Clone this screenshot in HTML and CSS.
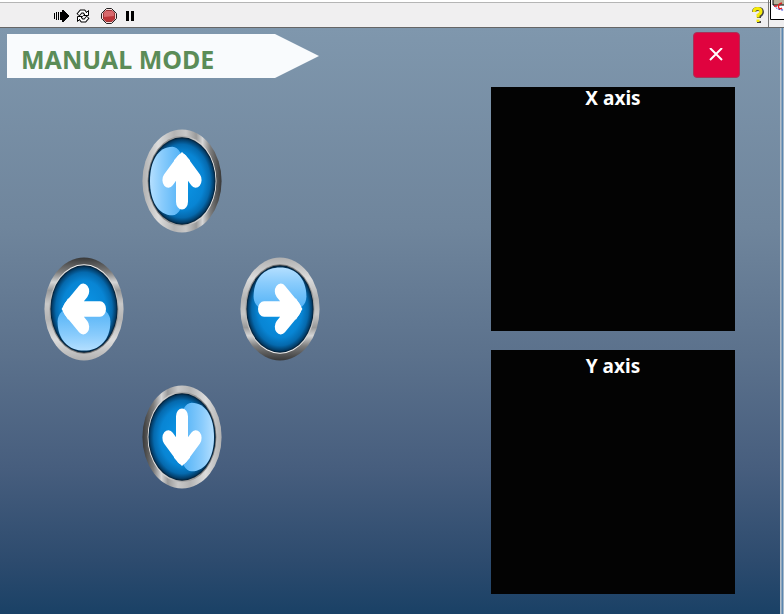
FILE: index.html
```html
<!DOCTYPE html>
<html lang="en">
<head>
<meta charset="utf-8">
<title>Manual mode</title>
<link rel="stylesheet" href="styles.css">
</head>
<body>
<svg class="defs" aria-hidden="true">
  <defs>
    <linearGradient id="rim" x1="0" y1="0" x2="0" y2="1">
      <stop offset="0" stop-color="#b0b0b0"/>
      <stop offset=".2" stop-color="#dcdcdc"/>
      <stop offset=".4" stop-color="#b4b4b4"/>
      <stop offset=".55" stop-color="#c8c8c8"/>
      <stop offset=".68" stop-color="#9a9a9a"/>
      <stop offset=".76" stop-color="#d6d6d6"/>
      <stop offset=".86" stop-color="#7c7c7c"/>
      <stop offset="1" stop-color="#383838"/>
    </linearGradient>
    <linearGradient id="lip" x1="0" y1="0" x2="0" y2="1">
      <stop offset="0" stop-color="#777"/>
      <stop offset=".5" stop-color="#aaa"/>
      <stop offset="1" stop-color="#f4f4f4"/>
    </linearGradient>
    <radialGradient id="glass" cx=".5" cy=".5" r=".5">
      <stop offset="0" stop-color="#0b97e8"/>
      <stop offset=".65" stop-color="#0885d4"/>
      <stop offset=".84" stop-color="#0569ad"/>
      <stop offset=".95" stop-color="#033c67"/>
      <stop offset="1" stop-color="#02192c"/>
    </radialGradient>
    <linearGradient id="gloss" x1="0" y1="0" x2="0" y2="1">
      <stop offset="0" stop-color="#b4dfff"/>
      <stop offset=".35" stop-color="#8accfc"/>
      <stop offset="1" stop-color="#4db0f6"/>
    </linearGradient>
    <symbol id="orb" viewBox="0 0 100 100" preserveAspectRatio="none">
      <ellipse cx="50" cy="50" rx="49.500" ry="49.500" fill="url(#rim)"/>
      <ellipse cx="50" cy="50" rx="43.500" ry="43" fill="url(#lip)"/>
      <ellipse cx="50" cy="50" rx="42" ry="42" fill="url(#glass)"/>
      <path d="M17 38C17 20 31 10 50 10S83 20 83 38C83 46 75 51 64 52H36C25 51 17 46 17 38Z" fill="url(#gloss)"/>
      <path d="M30 50H67M51 33L69 50L51 67" fill="none" stroke="#fff" stroke-width="15" stroke-linecap="round" stroke-linejoin="round"/>
      <path d="M51 44V56L70 60L78 50L70 40Z" fill="#fff"/>
    </symbol>
  </defs>
</svg>

<header class="toolbar">
  <div class="tools">
    <button class="tool" aria-label="Run">
      <svg width="16" height="16" viewBox="0 0 16 16" shape-rendering="crispEdges"><path d="M1 5h1v6H1zM3 4h1v8H3zM5 4h1v8H5zM7 4h2V2h2v1h1v1h1v1h1v1h1v1h1v2h-1v1h-1v1h-1v1h-1v1h-1v1H9v-2H7z"/></svg>
    </button>
    <button class="tool" aria-label="Run continuously">
      <svg width="16" height="16" viewBox="0 0 16 16"><g fill="none" stroke="#000" stroke-width="4"><path d="M3 7L6 3.500H9L11 6"/><path d="M13 9L10 12.500H7L5 10"/></g><g fill="#fff" stroke="#000"><path d="M8.500 7.500H13.500V2.500Z"/><path d="M7.500 8.500H2.500V13.500Z"/></g><g fill="none" stroke="#fff" stroke-width="2"><path d="M3.500 6.500L6 3.500H9L11 6"/><path d="M12.500 9.500L10 12.500H7L5 10"/></g></svg>
    </button>
    <button class="tool" aria-label="Abort">
      <svg width="16" height="16" viewBox="0 0 16 16"><path d="M5.500 .5h5l5 5v5l-5 5h-5l-5-5v-5z" fill="#f6dede" stroke="#222"/><path d="M5 2.500h6L13.500 5v6L11 13.500H5L2.500 11V5z" fill="#bd3438" stroke="#9c3537"/><path d="M5 3h6l2 2v3L3 9V5z" fill="#d8686c"/></svg>
    </button>
    <button class="tool" aria-label="Pause">
      <svg width="16" height="16" viewBox="0 0 16 16" shape-rendering="crispEdges"><path d="M1 3h3v10H1zM6 3h3v10H6z"/></svg>
    </button>
  </div>
  <button class="tool help" aria-label="Help">
    <svg width="16" height="18" viewBox="0 0 16 18"><path d="M4 6Q4 3 8 3T12 6Q12 8 9 10V12M9 15V17" fill="none" stroke="#444" stroke-width="4"/><path d="M4 6Q4 2.500 7.500 2.500T11 5.500Q11 7.500 8 9V11.500M8 13.500V16" fill="none" stroke="#f5ea08" stroke-width="3"/></svg>
  </button>
  <div class="badge">
    <svg width="14" height="20" viewBox="0 0 14 20"><path d="M0 0h14v20H0z" fill="#fff"/><path d="M3 0h11v5H3z" fill="#b9b39c"/><path d="M3 0V5H14" fill="none" stroke="#000"/><path d="M4 5Q6 10 14 10" fill="none" stroke="#2b35d0" stroke-dasharray="2 1"/><path d="M12 3Q8 4 8.500 7T12 8M4 6H7" fill="none" stroke="#e02020" stroke-width="1.500"/><path d="M.5 0V19.500H14" fill="none" stroke="#000"/></svg>
  </div>
</header>

<main class="panel">
  <section class="controls">
    <h1 class="banner">MANUAL MODE</h1>
    <div class="pad">
      <button class="jog up" aria-label="Y up"><svg viewBox="0 0 100 100" preserveAspectRatio="none"><use href="#orb" width="100" height="100" transform="rotate(-90 50 50)"/></svg></button>
      <button class="jog left" aria-label="X left"><svg viewBox="0 0 100 100" preserveAspectRatio="none"><use href="#orb" width="100" height="100" transform="rotate(180 50 50)"/></svg></button>
      <button class="jog right" aria-label="X right"><svg viewBox="0 0 100 100" preserveAspectRatio="none"><use href="#orb" width="100" height="100"/></svg></button>
      <button class="jog down" aria-label="Y down"><svg viewBox="0 0 100 100" preserveAspectRatio="none"><use href="#orb" width="100" height="100" transform="rotate(90 50 50)"/></svg></button>
    </div>
  </section>
  <section class="readouts">
    <button class="close" aria-label="Close">
      <svg width="15" height="15" viewBox="0 0 15 15"><path d="M1 0L13 12M13 0L1 12" stroke="#fff" stroke-width="2"/></svg>
    </button>
    <div class="axis"><h2>X axis</h2></div>
    <div class="axis axis-y"><h2>Y axis</h2></div>
  </section>
</main>
</body>
</html>
```
FILE: styles.css
```css
* {
  box-sizing: border-box;
}

body {
  display: flex;
  flex-direction: column;
  min-height: 100vh;
  margin: 0;
  font-family: "Noto Sans", "Open Sans", sans-serif;
}

button {
  padding: 0;
  border: 0;
  background: none;
}

svg {
  display: block;
}

.defs {
  position: absolute;
  width: 0;
  height: 0;
}

.toolbar {
  display: flex;
  align-items: center;
  height: 28px;
  padding-left: 53px;
  background: #f0eff0;
  border-bottom: 1px solid #666;
  box-shadow: inset 0 2px #fff, inset 0 3px #b5b5b5;
}

.tools {
  display: flex;
  flex: 1;
  gap: 8px;
  padding-top: 4px;
}

.tool:nth-child(2) {
  margin: 0 2px 0 -2px;
}

.help {
  padding-top: 2px;
  margin-right: 6px;
}

.badge {
  align-self: stretch;
  padding-left: 1px;
  border-left: 1px solid #777;
}

.panel {
  display: flex;
  flex: 1;
  justify-content: space-between;
  padding: 4px 44px 20px 7px;
  background:
    linear-gradient(90deg, #b4bfc9 1px, #8ba6bf 1px 2px, #5b87b0 2px 3px, #a9b9c8 3px) right / 4px 100% no-repeat,
    linear-gradient(#7f97ad, #6f859c 34%, #5b718c 56%, #475e7e 75%, #2d4b6e 91%, #1a4166);
}

.banner {
  width: 312px;
  height: 44px;
  margin: 2px 0 0;
  padding-left: 14px;
  background: #f9fbfd;
  clip-path: polygon(0 0, 268px 0, 100% 50%, 268px 100%, 0 100%);
  color: #5b8c58;
  font-size: 25px;
  font-weight: 700;
  line-height: 50px;
}

.pad {
  display: grid;
  grid-template: repeat(3, 128px) / repeat(3, 98px);
  place-items: center;
  margin: 39px 0 0 28px;
}

.jog {
  width: 80px;
  height: 104px;
}

.jog svg {
  width: 100%;
  height: 100%;
}

.up { grid-area: 1 / 2; }
.left { grid-area: 2 / 1; }
.right { grid-area: 2 / 3; }
.down { grid-area: 3 / 2; }

.readouts {
  display: flex;
  flex-direction: column;
  align-items: flex-start;
  width: 249px;
}

.close {
  display: grid;
  place-items: center;
  align-self: flex-end;
  width: 47px;
  height: 46px;
  background: #e0033f;
  border: 1px solid #a83258;
  border-radius: 4px;
}

.axis {
  width: 244px;
  height: 244px;
  margin-top: 9px;
  background: #030303;
  color: #fff;
  text-align: center;
}

.axis-y {
  margin-top: 19px;
  padding-top: 5px;
}

.axis h2 {
  margin: 0;
  font-size: 19px;
  font-weight: 700;
  line-height: 22px;
}
```
